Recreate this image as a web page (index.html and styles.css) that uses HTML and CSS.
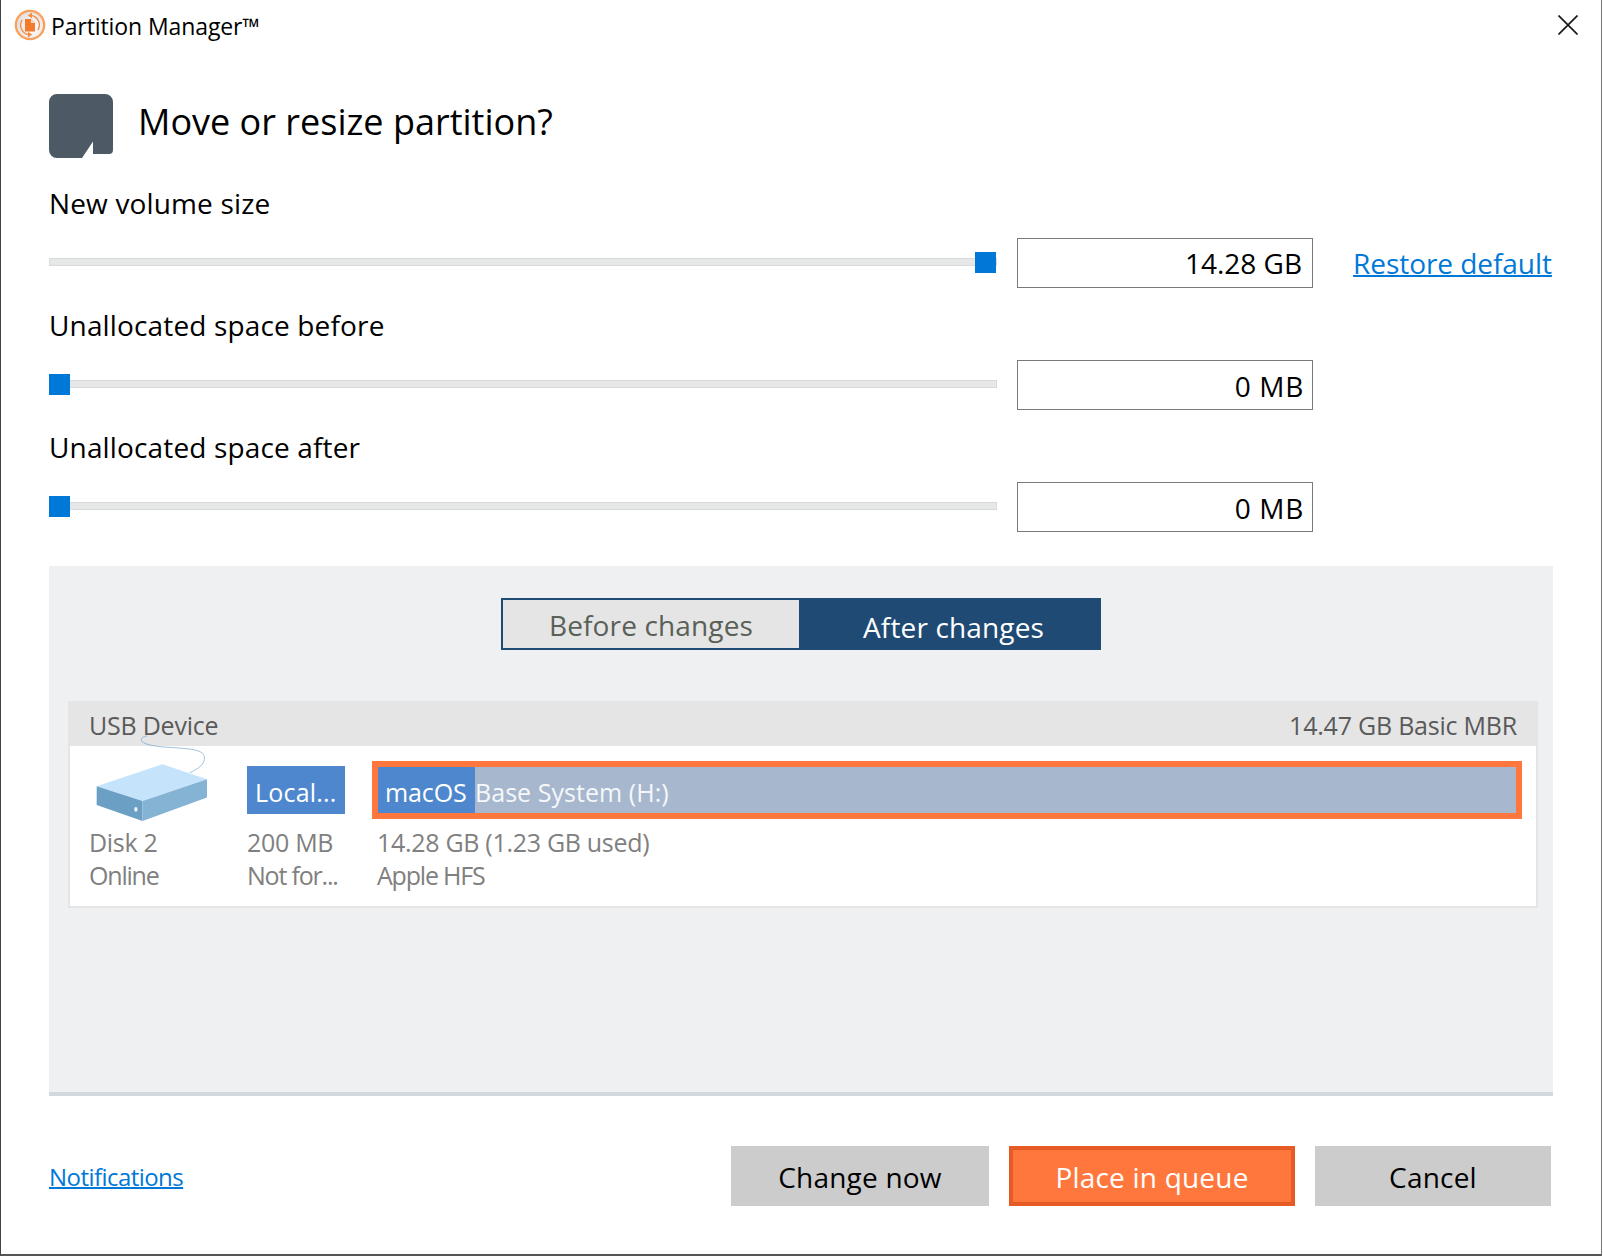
FILE: index.html
```html
<!DOCTYPE html>
<html>
<head>
<meta charset="utf-8">
<title>Partition Manager</title>
<link rel="stylesheet" href="styles.css">
</head>
<body>
<div class="window">
	<div class="titlebar">
		<svg class="logo" viewBox="0 0 32 32">
			<defs>
				<radialGradient id="face" cx="0.6" cy="0.6" r="0.6">
					<stop offset="0" stop-color="#ffffff"/>
					<stop offset="1" stop-color="#e4e2e0"/>
				</radialGradient>
			</defs>
			<circle cx="16" cy="16" r="15.300" fill="#fb9f5c"/>
			<circle cx="16" cy="16" r="13" fill="url(#face)"/>
			<path d="M17 6.300a9.800 9.800 0 0 1 7 14.700M15 25.700a9.800 9.800 0 0 1-7-14.700" fill="none" stroke="#f58a45" stroke-width="1.300"/>
			<path d="M18 3.500l-4.200 2.900 4.200 2.900zM14 28.500l4.200-2.900-4.200-2.900z" fill="#f58a45"/>
			<path d="M11 10h6l4 4v8.500H11z" fill="#f47a2c"/>
			<path d="M17 10l4 4h-4z" fill="#ffd9bd"/>
		</svg>
		<span class="app-name">Partition Manager™</span>
		<svg class="close" viewBox="0 0 20 20">
			<path d="M.5.500l19 19M19.500.500l-19 19" fill="none" stroke="#1a1a1a" stroke-width="1.700"/>
		</svg>
	</div>

	<div class="content">
		<div class="heading">
			<svg class="heading-icon" viewBox="0 0 64 64">
				<path d="M8 0h48a8 8 0 0 1 8 8v48a4 4 0 0 1-4 4H44V47.500L33 64H8a8 8 0 0 1-8-8V8a8 8 0 0 1 8-8z" fill="#4d5a65"/>
			</svg>
			<h1>Move or resize partition?</h1>
		</div>

		<div class="field">
			<label>New volume size</label>
			<div class="field-row">
				<div class="slider"><span class="thumb thumb-end"></span></div>
				<div class="value">14.28 GB</div>
				<a class="restore" href="#/">Restore default</a>
			</div>
		</div>
		<div class="field">
			<label>Unallocated space before</label>
			<div class="field-row">
				<div class="slider"><span class="thumb"></span></div>
				<div class="value value-mb">0 MB</div>
			</div>
		</div>
		<div class="field">
			<label>Unallocated space after</label>
			<div class="field-row">
				<div class="slider"><span class="thumb"></span></div>
				<div class="value value-mb">0 MB</div>
			</div>
		</div>

		<div class="panel">
			<div class="toggle">
				<div class="tab tab-before">Before changes</div>
				<div class="tab tab-after">After changes</div>
			</div>
			<div class="disk">
				<div class="disk-head">
					<span>USB Device</span>
					<span>14.47 GB Basic MBR</span>
				</div>
				<div class="disk-body">
					<div class="disk-info">
						<svg class="disk-icon" viewBox="165 135 340 260">
							<path d="M450 248C475 236 497 222 494 200C490 178 455 176 400 172C360 170 318 166 306 153C300 143 312 138 322 137" fill="none" stroke="#6fa3c7" stroke-width="2"/>
							<path d="M170 288L368 222L502 267L308 333z" fill="#c5e4fb"/>
							<path d="M170 288L308 333V393L170 345z" fill="#6c9fc4"/>
							<path d="M308 333L502 267V322L308 393z" fill="#85b3d4"/>
							<ellipse cx="288" cy="358" rx="5" ry="7" fill="#e8f3fb"/>
						</svg>
						<div class="line">Disk 2</div>
						<div class="line line-sub">Online</div>
					</div>
					<div class="part part-small">
						<div class="bar"><span class="bar-used bar-full">Local...</span></div>
						<div class="line">200 MB</div>
						<div class="line line-sub">Not for...</div>
					</div>
					<div class="part part-big">
						<div class="bar bar-selected">
							<span class="bar-used">macOS</span><span class="bar-rest">Base System (H:)</span>
						</div>
						<div class="line">14.28 GB (1.23 GB used)</div>
						<div class="line line-sub">Apple HFS</div>
					</div>
				</div>
			</div>
		</div>

		<div class="footer">
			<a class="notifications" href="#/">Notifications</a>
			<div class="buttons">
				<button class="btn btn-change">Change now</button>
				<button class="btn btn-queue">Place in queue</button>
				<button class="btn btn-cancel">Cancel</button>
			</div>
		</div>
	</div>
</div>
</body>
</html>
```

FILE: styles.css
```css
* { padding: 0; margin: 0; box-sizing: border-box; }

body { background: #fff; font-family: "Open Sans", "Noto Sans", sans-serif; color: #000; overflow: hidden; }

.window { width: 1602px; height: 1256px; background: #fff; border-left: 1px solid #444; border-right: 1px solid #777; border-bottom: 2px solid #555; }

.titlebar { height: 50px; display: flex; align-items: center; padding: 0 23px 0 13px; }
.logo { width: 32px; height: 32px; }
.app-name { font-size: 23px; letter-spacing: -0.1px; margin-left: 5px; padding-top: 2px; flex: 1; }
.close { width: 20px; height: 20px; }

.content { padding: 0 47px 0 48px; }

.heading { display: flex; align-items: center; height: 64px; margin: 44px 0 8px; }
.heading-icon { width: 64px; height: 64px; }
h1 { font-size: 36px; font-weight: 400; letter-spacing: 0; margin-left: 25px; margin-top: -10px; }

.field { height: 122px; }
.field label { display: block; height: 72px; padding-top: 18px; font-size: 28px; line-height: 38px; letter-spacing: 0.15px; }
.field-row { display: flex; align-items: center; height: 50px; }

.slider { position: relative; width: 948px; height: 8px; margin-top: -2px; background: #e6e8e8; border: 1px solid #d8dada; }
.thumb { position: absolute; left: -1px; top: -7px; width: 21px; height: 21px; background: #0078d7; }
.thumb-end { left: auto; right: 0; }

.value { width: 296px; height: 50px; margin-left: 20px; border: 1px solid #7a7a7a; text-align: right; padding-right: 10px; font-size: 28px; line-height: 48px; letter-spacing: 0; }
.value-mb { padding-right: 8px; line-height: 51px; letter-spacing: 0.7px; }

.restore { margin-left: 40px; color: #0078d7; font-size: 28px; letter-spacing: -0.05px; text-decoration-thickness: 2px; }

.panel { width: 1504px; height: 530px; margin-top: 34px; padding: 32px 15px 0 19px; background: #eff0f2; border-bottom: 4px solid #d3d7de; }

.toggle { display: flex; width: 600px; height: 52px; margin: 0 auto 51px; border: 2px solid #1e4a73; position: relative; left: -2px; }
.tab { display: flex; align-items: center; justify-content: center; font-size: 28px; letter-spacing: 0.15px; }
.tab-before { width: 296px; background: #e5e5e5; color: #596058; padding-top: 2px; }
.tab-after { flex: 1; background: #1e4a73; color: #fff; padding: 5px 0 0 9px; }

.disk { height: 207px; background: #fff; border: 2px solid #e5e5e5; border-top: 0; }
.disk-head { display: flex; justify-content: space-between; height: 45px; padding: 0 19px 0 19px; background: #e5e5e5; color: #5a5a5a; font-size: 25px; line-height: 49px; letter-spacing: -0.22px; }
.disk-body { display: flex; height: 160px; }
.disk-info { width: 172px; padding-left: 19px; }
.disk-icon { display: block; width: 113px; height: 87px; margin: -11px 0 0 6px; position: relative; }

.line { color: #808080; font-size: 25px; line-height: 33px; letter-spacing: -0.3px; white-space: nowrap; }
.line-sub { letter-spacing: -1.2px; }
.disk-info .line:first-of-type { margin-top: 4px; }
.part { padding-top: 15px; }
.part-small { width: 130px; }
.part-small .line { padding-left: 5px; }
.part-big { flex: 1; margin-right: 14px; }
.part-big .line { padding-left: 5px; }
.part .line:nth-child(2) { margin-top: 7px; }

.bar { display: flex; height: 58px; color: #fff; font-size: 25px; letter-spacing: -0.25px; }
.part-small .bar { padding: 5px 0 5px 5px; }
.bar-used { display: block; background: #4e87cd; padding: 0 0 0 8px; line-height: 52px; }
.bar-full { width: 98px; letter-spacing: 0.2px; }
.bar-selected { border: 6px solid #ff773d; background: #a7b7cd; height: 58px; }
.bar-selected .bar-used { width: 97px; line-height: 50px; padding-left: 7px; letter-spacing: -0.1px; }
.bar-rest { color: #f5f7fa; line-height: 50px; letter-spacing: 0.05px; }

.footer { display: flex; justify-content: space-between; align-items: center; height: 60px; margin-top: 50px; }
.notifications { color: #0078d7; font-size: 24px; letter-spacing: -0.55px; text-decoration-thickness: 2px; }
.buttons { display: flex; gap: 20px; margin-right: 3px; }
.btn { height: 60px; border: 0; padding-top: 2px; background: #ccc; color: #000; font-family: "Open Sans", "Noto Sans", sans-serif; font-size: 28px; letter-spacing: 0.2px; }
.btn-change { width: 258px; }
.btn-queue { width: 286px; background: #ff773d; color: #fff; border: 4px solid #e55a25; }
.btn-cancel { width: 236px; }
```
